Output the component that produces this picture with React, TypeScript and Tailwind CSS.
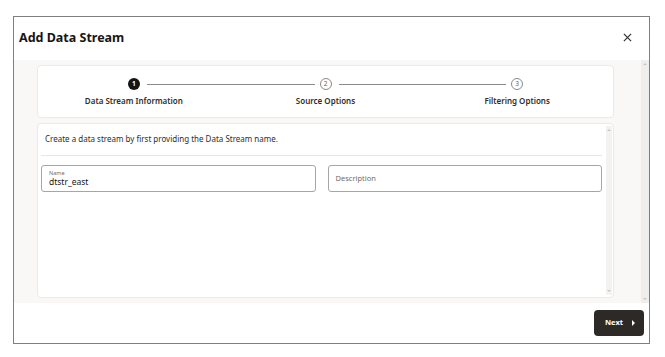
const font = { fontFamily: '"Noto Sans", "Open Sans", sans-serif' };

interface Step {
  num: number;
  label: string;
  active: boolean;
}

const steps: Step[] = [
  { num: 1, label: "Data Stream Information", active: true },
  { num: 2, label: "Source Options", active: false },
  { num: 3, label: "Filtering Options", active: false },
];

function StepItem({ step, index }: { step: Step; index: number }) {
  return (
    <div className="relative flex flex-1 flex-col items-center">
      {index > 0 && (
        <div className="absolute left-0 right-1/2 top-[6px] mr-[11px] h-px bg-[#8c8a87]" />
      )}
      {index < steps.length - 1 && (
        <div className="absolute left-1/2 right-0 top-[6px] ml-[13px] h-px bg-[#8c8a87]" />
      )}
      {step.active ? (
        <div className="flex h-[12px] w-[12px] items-center justify-center rounded-full bg-[#161513] text-[6.5px] font-bold leading-none text-white">
          {step.num}
        </div>
      ) : (
        <div className="flex h-[12px] w-[12px] items-center justify-center rounded-full border border-[#8c8a87] bg-white text-[6.5px] leading-none text-[#5e5c59]">
          {step.num}
        </div>
      )}
      <div className="mt-[7px] text-[8px] font-semibold leading-none text-[#312d2a]">
        {step.label}
      </div>
    </div>
  );
}

function ScrollTrack({ className }: { className: string }) {
  return (
    <div className={className}>
      <div className="flex justify-center pt-[3px]">
        <div className="h-0 w-0 border-x-[2px] border-b-[2px] border-x-transparent border-b-[#c9c7c4]" />
      </div>
      <div className="flex-1" />
      <div className="flex justify-center pb-[3px]">
        <div className="h-0 w-0 border-x-[2px] border-t-[2px] border-x-transparent border-t-[#c9c7c4]" />
      </div>
    </div>
  );
}

export default function App() {
  return (
    <div className="h-[357px] w-[665px] bg-white pl-[13px] pt-[16px]" style={font}>
      <div className="flex h-[328px] w-[637px] flex-col border border-[#7f7f7f] bg-white">
        <div className="flex h-[43px] items-center justify-between pl-[5px] pr-[17px]">
          <h1 className="text-[12.5px] font-bold text-[#161513]">Add Data Stream</h1>
          <svg width="9" height="9" viewBox="0 0 10 10" className="mt-[-2px]">
            <path d="M1 1L9 9M9 1L1 9" stroke="#312d2a" strokeWidth="1.3" />
          </svg>
        </div>

        <div className="flex h-[243px] bg-[#f9f8f6]">
          <div className="flex flex-1 flex-col gap-[5px] py-[5px] pl-[23px] pr-[27px]">
            <div className="flex h-[53px] items-start rounded-[4px] border border-[#eceae7] bg-white pt-[12px]">
              {steps.map((s, i) => (
                <StepItem key={s.num} step={s} index={i} />
              ))}
            </div>

            <div className="flex flex-1 rounded-[4px] border border-[#eceae7] bg-white">
              <div className="flex flex-1 flex-col pl-[3px] pr-[4px]">
                <p className="pl-[4px] pt-[11px] text-[8px] leading-none text-[#312d2a]">
                  Create a data stream by first providing the Data Stream name.
                </p>
                <div className="mt-[12px] h-px bg-[#e8e6e3]" />
                <div className="mt-[9px] flex gap-[12px]">
                  <div className="flex h-[27px] flex-1 flex-col justify-center rounded-[3px] border border-[#a8a6a2] px-[7px]">
                    <span className="text-[5.5px] leading-none text-[#6f6c69]">Name</span>
                    <span className="mt-[2px] text-[8.5px] leading-none text-[#161513]">dtstr_east</span>
                  </div>
                  <div className="flex h-[27px] flex-1 items-center rounded-[3px] border border-[#a8a6a2] px-[7px]">
                    <span className="text-[7.5px] leading-none text-[#6f6c69]">Description</span>
                  </div>
                </div>
              </div>
              <ScrollTrack className="my-[2px] mr-px flex w-[6px] flex-col bg-[#f3f2f0]" />
            </div>
          </div>
          <ScrollTrack className="flex w-[8px] flex-col bg-[#efeeec]" />
        </div>

        <div className="flex flex-1 items-center justify-end pr-[5px]">
          <button className="flex h-[26px] w-[50px] items-center justify-center gap-[9px] rounded-[4px] bg-[#2d2926] pl-[2px]">
            <span className="text-[7.5px] font-bold leading-none text-white">Next</span>
            <span className="h-0 w-0 border-y-[3px] border-l-[3px] border-y-transparent border-l-white" />
          </button>
        </div>
      </div>
    </div>
  );
}
